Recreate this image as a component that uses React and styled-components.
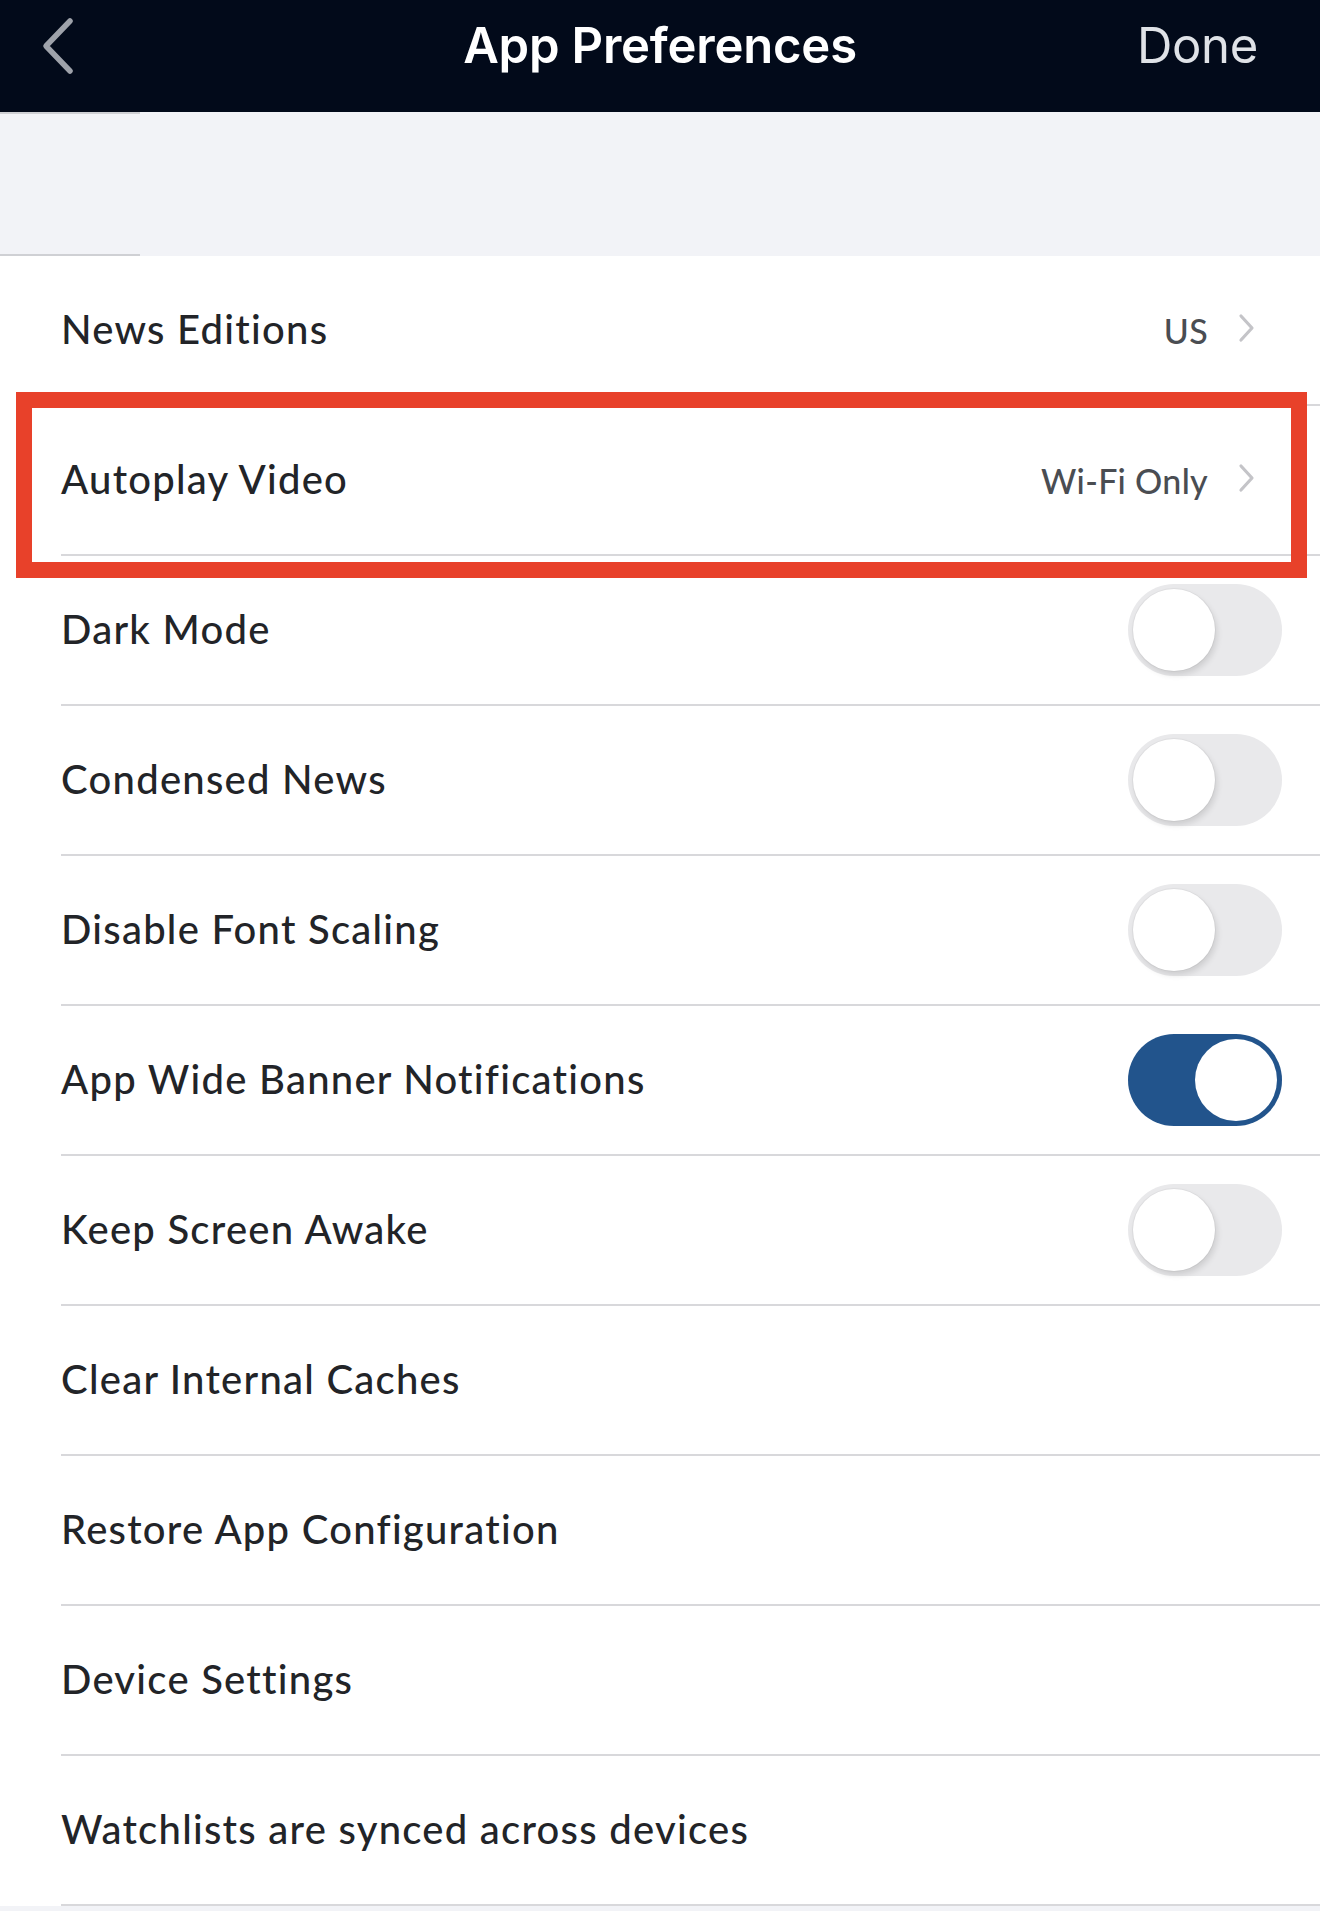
import styled, { createGlobalStyle } from 'styled-components';

const GlobalStyle = createGlobalStyle`
  html, body {
    margin: 0;
    padding: 0;
    background: #f2f3f7;
  }
  body {
    font-family: Lato, "Open Sans", sans-serif;
    -webkit-font-smoothing: antialiased;
  }
`;

const Screen = styled.div`
  width: 1320px;
  min-height: 1911px;
  background: #f2f3f7;
`;

const NavBar = styled.header`
  height: 112px;
  background: #020a1a;
  display: grid;
  grid-template-columns: 1fr auto 1fr;
  align-items: center;
  padding: 0 38px;
  box-sizing: border-box;
  font-family: Inter, "Liberation Sans", sans-serif;
`;

const BackButton = styled.button`
  justify-self: start;
  align-self: start;
  margin-top: 16px;
  background: none;
  border: 0;
  padding: 0;
  width: 38px;
  height: 60px;
  display: flex;
`;

const Title = styled.h1`
  margin: 0 0 22px;
  color: #ffffff;
  font-size: 49px;
  font-weight: 600;
  letter-spacing: -0.2px;
`;

const DoneButton = styled.button`
  justify-self: end;
  margin: 0 24px 22px 0;
  background: none;
  border: 0;
  padding: 0;
  font-family: inherit;
  color: #dfe2e7;
  font-size: 49px;
  font-weight: 400;
  letter-spacing: -0.3px;
`;

const Spacer = styled.div`
  height: 144px;
  position: relative;
  &::before,
  &::after {
    content: '';
    position: absolute;
    left: 0;
    width: 140px;
    height: 2px;
    background: #cfd0d4;
  }
  &::before { top: 0; }
  &::after { bottom: 0; }
`;

const List = styled.ul`
  list-style: none;
  margin: 0;
  padding: 0;
  background: #ffffff;
`;

const Row = styled.li`
  position: relative;
  padding-left: 61px;

  ${({ $highlighted }) =>
    $highlighted &&
    `
    &::after {
      content: '';
      position: absolute;
      top: -14px;
      bottom: -22px;
      left: 16px;
      right: 13px;
      border: 16px solid #e8412a;
      pointer-events: none;
    }
  `}
`;

const RowInner = styled.div`
  height: 150px;
  box-sizing: border-box;
  border-bottom: 2px solid #d8d8db;
  display: flex;
  align-items: center;
  padding-right: 38px;
`;

const Label = styled.span`
  flex: 1;
  color: #222428;
  font-size: 40px;
  font-weight: 500;
  letter-spacing: 1.25px;
  padding-bottom: 2px;
`;

const Value = styled.span`
  color: #4a4d52;
  font-size: 34px;
  font-weight: 500;
  letter-spacing: 0.3px;
  margin-right: 30px;
`;

const ChevronWrap = styled.span`
  display: flex;
  margin-right: 26px;
  margin-bottom: 4px;
`;

const Track = styled.span`
  width: 154px;
  height: 92px;
  border-radius: 46px;
  box-sizing: border-box;
  padding: 5px;
  display: flex;
  justify-content: ${({ $on }) => ($on ? 'flex-end' : 'flex-start')};
  background: ${({ $on }) => ($on ? '#22548c' : '#e9e9eb')};
`;

const Knob = styled.span`
  width: 82px;
  height: 82px;
  border-radius: 50%;
  background: #ffffff;
  box-shadow: ${({ $on }) =>
    $on ? 'none' : '2px 4px 6px rgba(0, 0, 0, 0.12), 0 0 0 1px rgba(0, 0, 0, 0.04)'};
`;

const BackIcon = () => (
  <svg width="38" height="60" viewBox="0 0 38 60">
    <path
      d="M32 5 L8 30 L32 55"
      fill="none"
      stroke="#9ea2aa"
      strokeWidth="5.5"
      strokeLinecap="round"
      strokeLinejoin="round"
    />
  </svg>
);

const Chevron = () => (
  <svg width="18" height="30" viewBox="0 0 18 30">
    <path
      d="M3 3 L14 15 L3 27"
      fill="none"
      stroke="#c4c4c8"
      strokeWidth="3.2"
      strokeLinecap="round"
      strokeLinejoin="round"
    />
  </svg>
);

const Toggle = ({ on }) => (
  <Track $on={on}>
    <Knob $on={on} />
  </Track>
);

const rows = [
  { label: 'News Editions', value: 'US' },
  { label: 'Autoplay Video', value: 'Wi-Fi Only', highlighted: true },
  { label: 'Dark Mode', toggle: false },
  { label: 'Condensed News', toggle: false },
  { label: 'Disable Font Scaling', toggle: false },
  { label: 'App Wide Banner Notifications', toggle: true },
  { label: 'Keep Screen Awake', toggle: false },
  { label: 'Clear Internal Caches' },
  { label: 'Restore App Configuration' },
  { label: 'Device Settings' },
  { label: 'Watchlists are synced across devices' },
];

const App = () => (
  <>
    <GlobalStyle />
    <Screen>
      <NavBar>
        <BackButton aria-label="Back">
          <BackIcon />
        </BackButton>
        <Title>App Preferences</Title>
        <DoneButton>Done</DoneButton>
      </NavBar>
      <Spacer />
      <List>
        {rows.map((row) => (
          <Row key={row.label} $highlighted={row.highlighted}>
            <RowInner>
              <Label>{row.label}</Label>
              {row.value && (
                <>
                  <Value>{row.value}</Value>
                  <ChevronWrap>
                    <Chevron />
                  </ChevronWrap>
                </>
              )}
              {row.toggle !== undefined && <Toggle on={row.toggle} />}
            </RowInner>
          </Row>
        ))}
      </List>
    </Screen>
  </>
);

export default App;
